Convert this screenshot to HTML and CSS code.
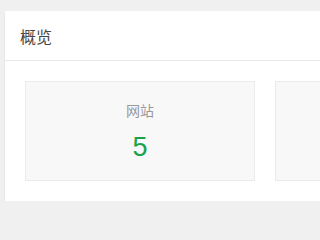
FILE: index.html
```html
<!DOCTYPE html>
<html lang="zh">
<head>
<meta charset="utf-8">
<title>概览</title>
<link rel="stylesheet" href="styles.css">
</head>
<body>
<div class="page">
  <section class="card">
    <header class="card-head">
      <h2 class="card-title">概览</h2>
    </header>
    <div class="card-body">
      <div class="stat">
        <div class="stat-label">网站</div>
        <div class="stat-value">5</div>
      </div>
      <div class="stat"></div>
    </div>
  </section>
</div>
</body>
</html>
```

FILE: styles.css
```css
html, body {
  margin: 0;
  padding: 0;
  overflow: hidden;
  background: #f0f0f0;
}
body {
  font-family: "Liberation Sans", Arial, "Noto Sans CJK SC", sans-serif;
}
.page {
  padding: 11px 0 0 5px;
}
.card {
  width: 520px;
  background: #ffffff;
  box-shadow: 0 1px 2px rgba(0, 0, 0, 0.1);
}
.card-head {
  height: 49px;
  display: flex;
  align-items: center;
  padding-left: 15px;
  border-bottom: 1px solid #e8e8e8;
}
.card-title {
  margin: 0;
  font-size: 16px;
  font-weight: normal;
  color: #464646;
  line-height: 24px;
  font-family: "Noto Sans CJK SC", sans-serif;
}
.card-body {
  display: flex;
  gap: 20px;
  padding: 20px;
}
.stat {
  width: 228px;
  height: 98px;
  flex: none;
  border: 1px solid #ebebeb;
  background: #f8f8f8;
  display: flex;
  flex-direction: column;
  align-items: center;
}
.stat-label {
  margin-top: 18px;
  font-size: 14px;
  line-height: 20px;
  color: #999999;
  font-family: "Noto Sans CJK SC", sans-serif;
}
.stat-value {
  margin-top: 9px;
  font-size: 27px;
  line-height: 36px;
  color: #1aa34a;
}
```
